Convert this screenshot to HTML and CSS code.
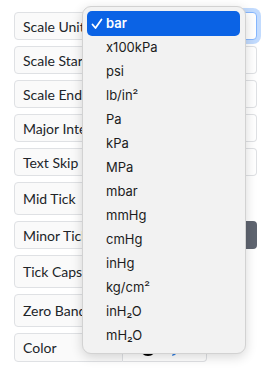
FILE: index.html
```html
<!DOCTYPE html>
<html>
<head>
<meta charset="utf-8">
<link rel="stylesheet" href="styles.css">
</head>
<body>
<div class="form">
  <div class="row"><span class="lbl">Scale Unit</span><div class="ctl focus"></div></div>
  <div class="row"><span class="lbl">Scale Start</span><div class="ctl"></div></div>
  <div class="row"><span class="lbl">Scale End</span><div class="ctl"></div></div>
  <div class="row"><span class="lbl">Major Interval</span><div class="ctl"></div></div>
  <div class="row"><span class="lbl">Text Skip</span><div class="ctl"></div></div>
  <div class="row tall"><span class="lbl">Mid Tick</span><div class="ctl short"></div></div>
  <div class="row"><span class="lbl">Minor Tick</span><div class="ctl"></div><div class="btn"></div></div>
  <div class="row tall"><span class="lbl">Tick Caps</span><div class="ctl short"></div></div>
  <div class="row tall"><span class="lbl">Zero Band</span><div class="ctl short"></div></div>
  <div class="row color"><span class="lbl">Color</span>
    <div class="ctl colorctl">
      <span class="swatch"></span>
      <svg class="pen" width="12" height="14" viewBox="0 0 12 14"><path d="M9 1 L11 3 L4 11 L1 12 L2 9 Z" fill="#2f7de1"/></svg>
    </div>
  </div>
</div>
<div class="menu">
  <div class="item sel"><svg class="chk" width="12" height="12" viewBox="0 0 12 12"><path d="M1.5 6.5 L4.5 10 L10.5 1.5" fill="none" stroke="#fff" stroke-width="1.8" stroke-linecap="round" stroke-linejoin="round"/></svg>bar</div>
  <div class="item">x100kPa</div>
  <div class="item">psi</div>
  <div class="item">lb/in²</div>
  <div class="item">Pa</div>
  <div class="item">kPa</div>
  <div class="item">MPa</div>
  <div class="item">mbar</div>
  <div class="item">mmHg</div>
  <div class="item">cmHg</div>
  <div class="item">inHg</div>
  <div class="item">kg/cm²</div>
  <div class="item">inH₂O</div>
  <div class="item">mH₂O</div>
</div>
</body>
</html>
```
FILE: styles.css
```css
html, body { margin: 0; padding: 0; background: #fff; }
body { width: 269px; height: 371px; overflow: hidden; position: relative; }
.form {
  padding: 12px 12px 0 14px;
  display: flex;
  flex-direction: column;
  gap: 6px;
  font-family: Lato, "Noto Sans", sans-serif;
  font-size: 14px;
  color: #212529;
}
.row { display: flex; height: 28px; }
.row.tall { height: 33px; }
.row.color { height: 29px; }
.lbl {
  width: 109px;
  box-sizing: border-box;
  flex: none;
  display: flex;
  align-items: center;
  padding-left: 8px;
  background: #fafafa;
  border: 1px solid #dfe1e4;
  border-radius: 4px 0 0 4px;
  white-space: nowrap;
  overflow: hidden;
}
.ctl {
  flex: 1;
  box-sizing: border-box;
  border: 1px solid #dfe1e4;
  border-left: none;
  border-radius: 0 4px 4px 0;
  background: #fff;
}
.ctl.focus {
  border: 1px solid #86b7fe;
  box-shadow: 0 0 0 4px rgba(13,110,253,.25);
}
.ctl.short { flex: none; width: 80px; }
.btn {
  width: 40px;
  background: #5f6570;
  border-radius: 0 4px 4px 0;
}
.colorctl {
  flex: none;
  width: 84px;
  display: flex;
  align-items: center;
  padding-left: 17px;
  gap: 15px;
}
.swatch { width: 16px; height: 16px; border-radius: 50%; background: #000; }
.pen { margin-top: 6px; }
.menu {
  position: absolute;
  left: 82px;
  top: 6px;
  width: 164px;
  box-sizing: border-box;
  padding: 4px 5px 6px 4px;
  background: #f2f2f2;
  border: 1px solid #d2d2d2;
  border-radius: 9px;
  box-shadow: 0 3px 12px rgba(0,0,0,.16);
  font-family: Inter, "Liberation Sans", sans-serif;
  font-size: 13px;
  color: #1c1c1c;
}
.item {
  height: 24px;
  line-height: 24px;
  padding-left: 19px;
  position: relative;
  border-radius: 5px;
}
.item.sel { background: #0b63e5; color: #fff; font-weight: 600; height: 25px; line-height: 25px; margin-bottom: -1px; }
.chk { position: absolute; left: 4px; top: 7px; }
```
